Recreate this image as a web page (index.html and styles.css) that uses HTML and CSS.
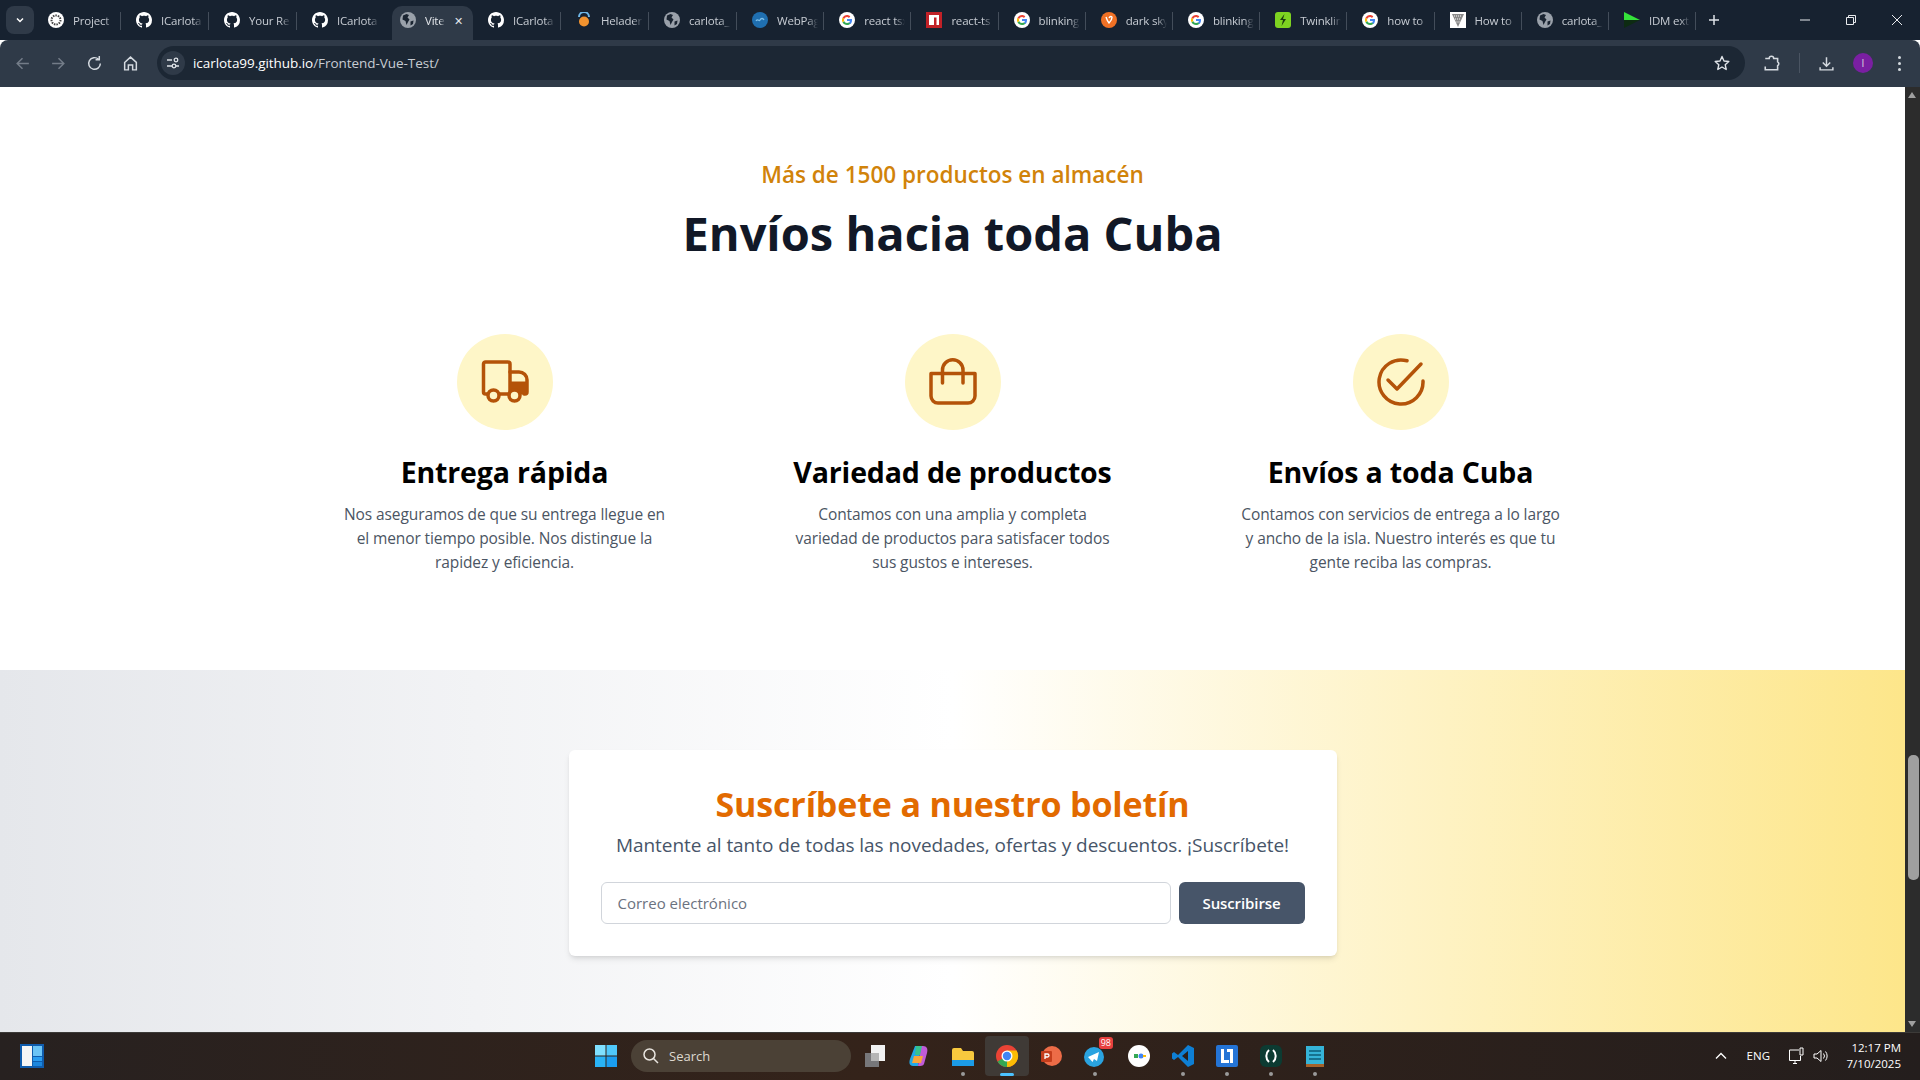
FILE: index.html
```html
<!DOCTYPE html>
<html lang="es">
<head>
  <meta charset="UTF-8">
  <title>Frontend Vue Test</title>
  <link rel="stylesheet" href="styles.css">
</head>
<body>

  <svg class="defs" width="0" height="0">
    <symbol id="gh" viewBox="0 0 16 16"><path fill="#fff" d="M8 0C3.58 0 0 3.58 0 8c0 3.54 2.29 6.53 5.47 7.59.4.07.55-.17.55-.38 0-.19-.01-.82-.01-1.49-2.01.37-2.53-.49-2.69-.94-.09-.23-.48-.94-.82-1.13-.28-.15-.68-.52-.01-.53.63-.01 1.08.58 1.23.82.72 1.21 1.87.87 2.33.66.07-.52.28-.87.51-1.07-1.78-.2-3.64-.89-3.64-3.95 0-.87.31-1.59.82-2.15-.08-.2-.36-1.02.08-2.12 0 0 .67-.21 2.2.82.64-.18 1.32-.27 2-.27s1.36.09 2 .27c1.53-1.04 2.2-.82 2.2-.82.44 1.1.16 1.92.08 2.12.51.56.82 1.27.82 2.15 0 3.07-1.87 3.75-3.65 3.95.29.25.54.73.54 1.48 0 1.07-.01 1.93-.01 2.2 0 .21.15.46.55.38A8 8 0 0 0 16 8c0-4.42-3.58-8-8-8z"/></symbol>
    <symbol id="globe" viewBox="0 0 16 16"><circle cx="8" cy="8" r="8" fill="#9aa1aa"/><path fill="#1a2431" d="M3 3.5 6.5 2 9 3 7.5 5.5 9.5 7.5 8 10 6.5 13 5.5 9 2.5 7.5zM10.5 9.5 13.5 8.5 13 12 10.5 13.5z"/></symbol>
    <symbol id="goog" viewBox="0 0 16 16"><circle cx="8" cy="8" r="8" fill="#fff"/><path fill="#4285f4" d="M13 8.1c0-.4 0-.7-.1-1H8v2h2.9c-.1.7-.5 1.200-1 1.600l1.600 1.300c1-.9 1.500-2.200 1.500-3.900z"/><path fill="#34a853" d="M8 13c1.400 0 2.500-.5 3.500-1.300L9.900 10.400c-.4.300-1 .5-1.900.5-1.300 0-2.400-.9-2.800-2L3.500 10.200C4.400 11.900 6.100 13 8 13z"/><path fill="#fbbc05" d="M5.200 8.900c-.2-.6-.2-1.200 0-1.800L3.500 5.800c-.7 1.400-.7 3 0 4.400z"/><path fill="#ea4335" d="M8 5.100c.8 0 1.400.3 1.900.8l1.400-1.400C10.500 3.500 9.400 3 8 3 6.100 3 4.400 4.100 3.500 5.800l1.700 1.300c.4-1.200 1.500-2 2.800-2z"/></symbol>
  </svg>

  <div class="tabstrip">
    <div class="tab-menu"><svg width="12" height="12" viewBox="0 0 12 12"><path d="M3 4.500 6 7.500 9 4.500" fill="none" stroke="#fff" stroke-width="1.500"/></svg></div>
    <div class="tabs">
      <div class="tab"><svg class="fav" viewBox="0 0 16 16"><circle cx="8" cy="8" r="8" fill="#fff"/><circle cx="8" cy="8" r="4.500" fill="none" stroke="#444" stroke-width="2" stroke-dasharray="1.500 1"/></svg><span>Project</span></div>
      <div class="tab"><svg class="fav"><use href="#gh"/></svg><span>ICarlota</span></div>
      <div class="tab"><svg class="fav"><use href="#gh"/></svg><span>Your Re</span></div>
      <div class="tab no-sep"><svg class="fav"><use href="#gh"/></svg><span>ICarlota</span></div>
      <div class="tab active"><svg class="fav"><use href="#globe"/></svg><span>Vite</span><b class="tab-x">✕</b></div>
      <div class="tab"><svg class="fav"><use href="#gh"/></svg><span>ICarlota</span></div>
      <div class="tab"><svg class="fav" viewBox="0 0 16 16"><path d="M3 5a5 5 0 0 1 10 0" fill="none" stroke="#6fb7e8" stroke-width="2"/><circle cx="8" cy="9.500" r="5" fill="#f2932f"/></svg><span>Heladería</span></div>
      <div class="tab"><svg class="fav"><use href="#globe"/></svg><span>carlota_</span></div>
      <div class="tab"><svg class="fav" viewBox="0 0 16 16"><circle cx="8" cy="8" r="8" fill="#1f6fb0"/><path d="M4 9c2-3 3 1 4-1s3-2 4 0" fill="none" stroke="#7fc0ea" stroke-width="1.300"/></svg><span>WebPage</span></div>
      <div class="tab"><svg class="fav"><use href="#goog"/></svg><span>react tsx</span></div>
      <div class="tab"><svg class="fav" viewBox="0 0 16 16"><rect width="16" height="16" fill="#c12127"/><path d="M3 3h10v10h-2.500V5.500H8V13H3z" fill="#fff"/></svg><span>react-ts</span></div>
      <div class="tab"><svg class="fav"><use href="#goog"/></svg><span>blinking</span></div>
      <div class="tab"><svg class="fav" viewBox="0 0 16 16"><circle cx="8" cy="8" r="8" fill="#f07125"/><path d="M5 5c1 3 2 5 3 6 2-2 3-4 3-5.500C11 4 9 4 8 6" fill="none" stroke="#fff" stroke-width="1.400"/></svg><span>dark sky</span></div>
      <div class="tab"><svg class="fav"><use href="#goog"/></svg><span>blinking</span></div>
      <div class="tab"><svg class="fav" viewBox="0 0 16 16"><rect width="16" height="16" rx="3" fill="#7ed321"/><path d="M9.500 2 5 8h3l-1.500 6L11 7H8z" fill="#1d3b10"/></svg><span>Twinkling</span></div>
      <div class="tab"><svg class="fav"><use href="#goog"/></svg><span>how to</span></div>
      <div class="tab"><svg class="fav" viewBox="0 0 16 16"><rect width="16" height="16" fill="#fff"/><path d="M2 2h12L8 15z" fill="#8a8a8a"/><path d="M4 4h8M5 7h6M6.500 10h3" stroke="#fff" stroke-dasharray="1 1"/></svg><span>How to</span></div>
      <div class="tab"><svg class="fav"><use href="#globe"/></svg><span>carlota_</span></div>
      <div class="tab"><svg class="fav" viewBox="0 0 16 16"><path d="M0 0 16 8 0 8z" fill="#35e33a"/><path d="M0 8H16L0 16z" fill="#0d2b12"/></svg><span>IDM extension</span></div>
    </div>
    <div class="new-tab"><svg width="12" height="12" viewBox="0 0 12 12"><path d="M6 1v10M1 6h10" stroke="#dfe3e8" stroke-width="1.500"/></svg></div>
    <div class="win-btns">
      <svg width="12" height="12" viewBox="0 0 12 12"><path d="M1 6h10" stroke="#e8eaed"/></svg>
      <svg width="12" height="12" viewBox="0 0 12 12"><path d="M1.500 3.500h7v7h-7zM3.500 3.500v-2h7v7h-2" fill="none" stroke="#e8eaed"/></svg>
      <svg width="12" height="12" viewBox="0 0 12 12"><path d="M1 1l10 10M11 1 1 11" stroke="#e8eaed"/></svg>
    </div>
  </div>

  <div class="toolbar">
    <svg class="tool dim" viewBox="0 0 16 16"><path d="M14 8H3M8 3 3 8l5 5" fill="none"/></svg>
    <svg class="tool dim" viewBox="0 0 16 16"><path d="M2 8h11M8 3l5 5-5 5" fill="none"/></svg>
    <svg class="tool" viewBox="0 0 16 16"><path d="M13.500 8A5.500 5.500 0 1 1 11.800 4M12.500 1v3.500H9" fill="none"/></svg>
    <svg class="tool" viewBox="0 0 16 16"><path d="M2.500 7 8 2l5.500 5v7H10V9.500H6V14H2.500z" fill="none"/></svg>
    <div class="address">
      <div class="site-info"><svg width="14" height="14" viewBox="0 0 14 14"><path d="M1 4h5M10 10h3M1 10h5" stroke="#dfe3e8" stroke-width="1.300"/><circle cx="10" cy="4" r="1.800" fill="none" stroke="#dfe3e8" stroke-width="1.300"/><circle cx="8" cy="10" r="1.800" fill="none" stroke="#dfe3e8" stroke-width="1.300"/></svg></div>
      <span class="url">icarlota99.github.io<span class="url-path">/Frontend-Vue-Test/</span></span>
      <svg class="star" viewBox="0 0 16 16"><path d="M8 1.500 10 6l4.800.5-3.600 3.200 1 4.800L8 12l-4.200 2.500 1-4.800L1.200 6.500 6 6z" fill="none" stroke="#dfe3e8" stroke-width="1.400" stroke-linejoin="round"/></svg>
    </div>
    <svg class="tool ext" viewBox="0 0 16 16"><path d="M2 4h3.500a2 2 0 0 1 4 0H13v3a2 2 0 0 1 0 3.500V14H2v-3" fill="none"/></svg>
    <i class="tool-sep"></i>
    <svg class="tool" viewBox="0 0 16 16"><path d="M8 2v8.500M4.500 7 8 10.500 11.500 7M2 11.500V14h12v-2.500" fill="none"/></svg>
    <div class="avatar">I</div>
    <div class="kebab"><i></i><i></i><i></i></div>
  </div>

  <div class="viewport">
    <main class="page">
      <section class="envios">
        <p class="kicker">Más de 1500 productos en almacén</p>
        <h1 class="envios-title">Envíos hacia toda Cuba</h1>
        <div class="features">
          <article class="feature">
            <div class="feature-icon">
              <svg viewBox="0 0 48 48" fill="none" stroke="#b45309" stroke-width="3.500" stroke-linecap="round" stroke-linejoin="round">
                <path d="M7 36H4.500a2 2 0 0 1-2-2V6a2 2 0 0 1 2-2H27a2 2 0 0 1 2 2v30H18"/>
                <path d="M29 14h9a8 8 0 0 1 8 8v12a2 2 0 0 1-2 2h-1"/>
                <path d="M29 24h17v12H38l-9 0z" fill="#b45309" stroke-width="1"/>
                <circle cx="12.500" cy="37.500" r="5.500" fill="#fef6c8"/>
                <circle cx="33.500" cy="37.500" r="5.500" fill="#fef6c8"/>
              </svg>
            </div>
            <h3>Entrega rápida</h3>
            <p>Nos aseguramos de que su entrega llegue en el menor tiempo posible. Nos distingue la rapidez y eficiencia.</p>
          </article>
          <article class="feature">
            <div class="feature-icon">
              <svg viewBox="0 0 48 48" fill="none" stroke="#b45309" stroke-width="3.500" stroke-linecap="round" stroke-linejoin="round">
                <path d="M2 15.500h44V38a7 7 0 0 1-7 7H9a7 7 0 0 1-7-7z"/>
                <path d="M13.500 25V12a10.250 10.250 0 0 1 20.500 0v13"/>
              </svg>
            </div>
            <h3>Variedad de productos</h3>
            <p>Contamos con una amplia y completa variedad de productos para satisfacer todos sus gustos e intereses.</p>
          </article>
          <article class="feature">
            <div class="feature-icon">
              <svg viewBox="0 0 48 48" fill="none" stroke="#b45309" stroke-width="3.500" stroke-linecap="round" stroke-linejoin="round">
                <path d="M30 2.800A22 22 0 1 0 46 23"/>
                <path d="M11 22l9 9L44 6"/>
              </svg>
            </div>
            <h3>Envíos a toda Cuba</h3>
            <p>Contamos con servicios de entrega a lo largo y ancho de la isla. Nuestro interés es que tu gente reciba las compras.</p>
          </article>
        </div>
      </section>

      <section class="boletin">
        <div class="boletin-card">
          <h2>Suscríbete a nuestro boletín</h2>
          <p>Mantente al tanto de todas las novedades, ofertas y descuentos. ¡Suscríbete!</p>
          <form class="boletin-form">
            <input type="email" placeholder="Correo electrónico">
            <button type="button">Suscribirse</button>
          </form>
        </div>
      </section>
    </main>
    <div class="scrollbar">
      <i class="arrow-up"></i>
      <i class="thumb"></i>
      <i class="arrow-down"></i>
    </div>
  </div>

  <footer class="taskbar">
    <div class="tb-left">
      <svg class="tb-icon" viewBox="0 0 24 24"><rect x="2" y="1" width="24" height="24" fill="#0f5cad" transform="translate(-2 -1)"/><rect x="2" y="2" width="10" height="20" fill="#f5f5f5"/><rect x="13" y="2" width="9" height="10" fill="#6cc4f5"/><rect x="13" y="13" width="9" height="4" fill="#2a9df0"/><rect x="13" y="18" width="9" height="4" fill="#1b86dd"/></svg>
    </div>
    <div class="tb-center">
      <svg class="tb-icon" viewBox="0 0 24 24"><rect x="1" y="1" width="10.500" height="10.500" fill="#7fe0ff"/><rect x="12.500" y="1" width="10.500" height="10.500" fill="#4fc8fb"/><rect x="1" y="12.500" width="10.500" height="10.500" fill="#29b3f6"/><rect x="12.500" y="12.500" width="10.500" height="10.500" fill="#1a9df0"/></svg>
      <div class="tb-search"><svg width="18" height="18" viewBox="0 0 18 18"><circle cx="7.500" cy="7.500" r="5.500" fill="none" stroke="#e8e4de" stroke-width="1.500"/><path d="M11.500 11.500 16 16" stroke="#e8e4de" stroke-width="1.500"/></svg><span>Search</span></div>
      <div class="tb-item"><svg class="tb-icon" viewBox="0 0 24 24"><rect x="2" y="9" width="14" height="14" fill="#77777a"/><rect x="8" y="1" width="14" height="16" fill="#f2f2f2"/><rect x="8" y="9" width="8" height="8" fill="#b5b5b5"/></svg></div>
      <div class="tb-item"><svg class="tb-icon" viewBox="0 0 24 24"><path d="M8 2h6l-3 20H6C2 22 2 18 3 15z" fill="#1fa8e8"/><path d="M16 2c4 0 5 3 4 7l-3 11c-1 2-3 2-6 2l3-20z" fill="#c05bd8"/><path d="M7 12h9l-2 7H5z" fill="#f6a63a"/><path d="M9 2h6l-2 9H8z" fill="#36c28e"/></svg></div>
      <div class="tb-item tb-open"><svg class="tb-icon" viewBox="0 0 24 24"><path d="M1 6a2 2 0 0 1 2-2h7l2 3h9a2 2 0 0 1 2 2v11a2 2 0 0 1-2 2H3a2 2 0 0 1-2-2z" fill="#f8c93e"/><rect x="1" y="16" width="22" height="6" fill="#1c9be6"/></svg></div>
      <div class="tb-item tb-active"><svg class="tb-icon" viewBox="0 0 24 24"><circle cx="12" cy="12" r="11" fill="#ea4335"/><path d="M12 12 2.500 17.500A11 11 0 0 0 12 23c1 0 3-.5 3-.5z" fill="#34a853"/><path d="M12 6.500h9.600A11 11 0 0 1 12 23z" fill="#fbbc05"/><circle cx="12" cy="12" r="5.500" fill="#fff"/><circle cx="12" cy="12" r="4.200" fill="#4285f4"/></svg></div>
      <div class="tb-item"><svg class="tb-icon" viewBox="0 0 24 24"><circle cx="13" cy="12" r="10" fill="#ed6c47"/><rect x="2" y="7" width="11" height="11" rx="1" fill="#c43e1c"/><path d="M6 15V10h2.500a1.500 1.500 0 0 1 0 3H6" fill="none" stroke="#fff" stroke-width="1.300"/></svg></div>
      <div class="tb-item tb-open"><svg class="tb-icon" viewBox="0 0 24 24"><circle cx="11" cy="13" r="10" fill="#2aa3e0"/><path d="M5 13 16 8l-2 9-3-2-1.500 3z" fill="#fff"/></svg><span class="tb-badge">98</span></div>
      <div class="tb-item"><svg class="tb-icon" viewBox="0 0 24 24"><circle cx="12" cy="12" r="11" fill="#fff"/><rect x="7" y="10" width="4" height="4" fill="#34a853"/><circle cx="14" cy="12" r="2.500" fill="#4285f4"/><rect x="16" y="11" width="3" height="2" fill="#fbbc05"/></svg></div>
      <div class="tb-item tb-open"><svg class="tb-icon" viewBox="0 0 24 24"><path d="M17 1 7 11 3 8 1 9.500v5L3 16l4-3 10 10 6-3V4z" fill="#0e7fd4"/><path d="M17 7v10l-6-5z" fill="#2a1f1a"/></svg></div>
      <div class="tb-item tb-open"><svg class="tb-icon" viewBox="0 0 24 24"><rect x="1" y="1" width="22" height="22" rx="2" fill="#2474d6"/><path d="M6 5h3v11h5v3H6zM12 5h6v14h-3V8h-3z" fill="#fff"/></svg></div>
      <div class="tb-item tb-open"><svg class="tb-icon" viewBox="0 0 24 24"><rect x="1" y="1" width="22" height="22" rx="6" fill="#0c3b32"/><path d="M10 6a8 8 0 0 0 0 12M14 6a8 8 0 0 1 0 12" fill="none" stroke="#fff" stroke-width="2"/></svg></div>
      <div class="tb-item tb-open"><svg class="tb-icon" viewBox="0 0 24 24"><rect x="3" y="2" width="18" height="20" fill="#35b4d8"/><rect x="3" y="20" width="18" height="3" fill="#a5632b"/><path d="M6 7h12M6 11h12M6 15h12" stroke="#0d5e78" stroke-width="1.500"/></svg></div>
    </div>
    <div class="tb-tray">
      <svg width="14" height="14" viewBox="0 0 14 14"><path d="M2 9.500 7 4.500l5 5" fill="none" stroke="#fff" stroke-width="1.300"/></svg>
      <span class="tray-lang">ENG</span>
      <svg width="18" height="18" viewBox="0 0 18 18"><path d="M11 3H1.500v10.500h11V9M5 16.500h4M7 13.500v3M12 1h3v7h-3z" fill="none" stroke="#fff"/></svg>
      <svg width="18" height="18" viewBox="0 0 18 18"><path d="M2 7h3l4-3.500v11L5 11H2zM11.500 6.500a4 4 0 0 1 0 5M13.500 4.500a7 7 0 0 1 0 9" fill="none" stroke="#fff"/></svg>
      <div class="tray-clock"><span>12:17 PM</span><span>7/10/2025</span></div>
    </div>
  </footer>

</body>
</html>
```

FILE: styles.css
```css
* {
  box-sizing: border-box;
}
html, body {
  height: 100%;
}
body {
  margin: 0;
  display: flex;
  flex-direction: column;
  overflow: hidden;
  font-family: "Open Sans", "Noto Sans", sans-serif;
  background: #fff;
}
.defs {
  position: absolute;
}

/* browser chrome */
.tabstrip {
  height: 40px;
  flex: none;
  display: flex;
  align-items: center;
  background: #172230;
  color: #c7ccd3;
  font-size: 11.5px;
  letter-spacing: -0.2px;
}
.tab-menu {
  width: 28px;
  height: 28px;
  margin: 0 6px;
  flex: none;
  display: flex;
  align-items: center;
  justify-content: center;
  border-radius: 8px;
  background: #2f3a48;
}
.tabs {
  display: flex;
  height: 100%;
  align-items: flex-end;
  margin-left: -7px;
}
.tab {
  width: 87.2px;
  height: 34px;
  flex: none;
  padding: 0 6px 6px 15px;
  display: flex;
  align-items: center;
  gap: 9px;
  position: relative;
}
.tab:nth-child(-n+8) {
  width: 88px;
}
.tab::after {
  content: "";
  position: absolute;
  right: 0;
  top: 6px;
  height: 18px;
  width: 1px;
  background: #434d5a;
}
.tab.no-sep::after, .tab.active::after {
  display: none;
}
.tab span {
  white-space: nowrap;
  overflow: hidden;
  flex: 1;
  -webkit-mask-image: linear-gradient(to right, #000 75%, transparent);
  mask-image: linear-gradient(to right, #000 75%, transparent);
}
.fav {
  width: 16px;
  height: 16px;
  flex: none;
}
.tab.active {
  width: 81px;
  margin-left: 7px;
  padding-left: 8px;
  padding-right: 10px;
  background: #2f3a48;
  border-radius: 10px 10px 0 0;
  color: #e3e6ea;
}
.tab-x {
  font-size: 11px;
  font-weight: 400;
  flex: none;
}
.new-tab {
  margin-left: 3px;
  width: 30px;
  display: flex;
  justify-content: center;
}
.win-btns {
  margin-left: auto;
  width: 138px;
  padding: 0 17px;
  display: flex;
  justify-content: space-between;
}
.toolbar {
  height: 47px;
  flex: none;
  display: flex;
  align-items: center;
  padding: 0 12px 1px 14px;
  background: #2f3a48;
  border-radius: 8px 8px 0 0;
}
.tool {
  width: 17px;
  height: 17px;
  flex: none;
  margin-right: 19px;
  stroke: #d5dae0;
  stroke-width: 1.4;
}
.tool.dim {
  stroke: #737c88;
}
.address {
  width: 1588px;
  height: 34px;
  margin-left: -1px;
  flex: none;
  display: flex;
  align-items: center;
  padding: 0 15px 0 4px;
  border-radius: 17px;
  background: #1c2734;
  color: #fff;
  font-size: 13.5px;
  letter-spacing: -0.05px;
}
.site-info {
  width: 24px;
  height: 24px;
  display: flex;
  align-items: center;
  justify-content: center;
  border-radius: 50%;
  background: #2f3a48;
  margin-right: 8px;
}
.url-path {
  color: #c7ccd3;
}
.star {
  width: 16px;
  height: 16px;
  margin-left: auto;
}
.ext {
  width: 18px;
  height: 18px;
  margin: 0 0 0 18px;
}
.tool-sep {
  width: 1px;
  height: 20px;
  margin: 0 18px;
  background: #4a5462;
}
.avatar {
  width: 20px;
  height: 20px;
  margin-left: -1px;
  flex: none;
  display: flex;
  align-items: center;
  justify-content: center;
  border-radius: 50%;
  background: #7a1fa2;
  color: #ddd;
  font-size: 10px;
}
.kebab {
  margin-left: 25px;
  display: flex;
  flex-direction: column;
  gap: 3px;
}
.kebab i {
  width: 3px;
  height: 3px;
  border-radius: 50%;
  background: #d5dae0;
}

/* page */
.viewport {
  flex: 1;
  min-height: 0;
  display: flex;
}
.page {
  flex: 1;
  min-width: 0;
  display: flex;
  flex-direction: column;
}
.envios {
  height: 583px;
  padding-top: 72px;
  text-align: center;
}
.kicker {
  margin: 0;
  font-size: 22.5px;
  line-height: 32px;
  font-weight: 600;
  color: #d1830a;
}
.envios-title {
  margin: 18px 0 0;
  font-size: 47px;
  line-height: 48px;
  font-weight: 700;
  color: #111827;
}
.features {
  width: 1344px;
  margin: 77px auto 0;
  display: grid;
  grid-template-columns: repeat(3, 1fr);
}
.feature {
  display: flex;
  flex-direction: column;
  align-items: center;
}
.feature-icon {
  width: 96px;
  height: 96px;
  display: flex;
  align-items: center;
  justify-content: center;
  border-radius: 50%;
  background: #fef6c8;
}
.feature-icon svg {
  width: 48px;
  height: 48px;
}
.feature h3 {
  margin: 24px 0 0;
  font-size: 28.5px;
  line-height: 36px;
  font-weight: 700;
  letter-spacing: -0.15px;
  color: #000;
}
.feature p {
  width: 326px;
  margin: 12px 0 0;
  font-size: 15.5px;
  line-height: 24px;
  letter-spacing: -0.1px;
  text-align: center;
  color: #4b5563;
}
.boletin {
  flex: 1;
  padding-top: 80px;
  background: linear-gradient(to right, #e5e7eb, #fff 50%, #fde68a);
}
.boletin-card {
  width: 768px;
  margin: 0 auto;
  padding: 32px;
  border-radius: 6px;
  background: #fff;
  text-align: center;
  box-shadow: 0 4px 6px -1px rgba(0,0,0,.1), 0 2px 4px -2px rgba(0,0,0,.1);
}
.boletin-card h2 {
  margin: 0;
  font-size: 34px;
  line-height: 44px;
  font-weight: 700;
  letter-spacing: -0.15px;
  color: #e26a00;
}
.boletin-card p {
  margin: 5px 0 0;
  font-size: 19px;
  line-height: 28px;
  letter-spacing: -0.05px;
  white-space: nowrap;
  color: #475569;
}
.boletin-form {
  display: flex;
  gap: 8px;
  margin-top: 23px;
}
.boletin-form input {
  flex: 1;
  min-width: 0;
  height: 42px;
  padding: 0 16px;
  border: 1px solid #d1d5db;
  border-radius: 6px;
  font: inherit;
  font-size: 15px;
}
.boletin-form input::placeholder {
  color: #6b7280;
}
.boletin-form button {
  width: 126px;
  height: 42px;
  border: 0;
  border-radius: 6px;
  background: #475569;
  color: #fff;
  font: inherit;
  font-size: 15px;
  letter-spacing: -0.1px;
  font-weight: 600;
}
.scrollbar {
  width: 15px;
  flex: none;
  position: relative;
  background: #2c2c2c;
}
.arrow-up, .arrow-down {
  position: absolute;
  left: 3px;
  width: 0;
  height: 0;
  border-left: 4.5px solid transparent;
  border-right: 4.5px solid transparent;
}
.arrow-up {
  top: 5px;
  border-bottom: 6px solid #9f9f9f;
}
.arrow-down {
  bottom: 5px;
  border-top: 6px solid #9f9f9f;
}
.thumb {
  position: absolute;
  left: 3px;
  right: 1px;
  top: 668px;
  height: 125px;
  border-radius: 5px;
  background: #9f9f9f;
}

/* windows taskbar */
.taskbar {
  height: 48px;
  flex: none;
  display: flex;
  align-items: center;
  padding-bottom: 2px;
  border-top: 1px solid #3c3a38;
  background: linear-gradient(to right, #272120, #34231a 45%, #241e1d);
  color: #fff;
}
.tb-left {
  width: 594px;
  padding-left: 20px;
  flex: none;
  display: flex;
}
.tb-icon {
  width: 24px;
  height: 24px;
  display: block;
}
.tb-center {
  display: flex;
  align-items: center;
}
.tb-search {
  width: 220px;
  height: 32px;
  margin: 0 2px 0 13px;
  padding-left: 11px;
  flex: none;
  display: flex;
  align-items: center;
  gap: 9px;
  border-radius: 16px;
  background: #4b4136;
  color: #ded9d1;
  font-size: 13px;
}
.tb-item {
  width: 44px;
  height: 40px;
  flex: none;
  display: flex;
  align-items: center;
  justify-content: center;
  position: relative;
}
.tb-open::after, .tb-active::after {
  content: "";
  position: absolute;
  bottom: 0;
  left: 20px;
  width: 4px;
  height: 4px;
  border-radius: 50%;
  background: #9a9a9a;
}
.tb-active {
  border-radius: 4px;
  background: #3f3a36;
}
.tb-active::after {
  left: 15px;
  width: 14px;
  height: 3px;
  border-radius: 2px;
  background: #4cc2ff;
}
.tb-badge {
  position: absolute;
  top: 1px;
  right: 4px;
  padding: 0 2px;
  border-radius: 3px;
  background: #e8403f;
  color: #fff;
  font-size: 9px;
  line-height: 12px;
}
.tb-tray {
  margin-left: auto;
  padding-right: 19px;
  display: flex;
  align-items: center;
  font-size: 12px;
}
.tray-lang {
  margin: 0 18px 0 19px;
  font-size: 11.5px;
}
.tb-tray svg + svg {
  margin-left: 6px;
}
.tray-clock {
  width: 60px;
  margin-left: 11px;
  display: flex;
  flex-direction: column;
  align-items: flex-end;
  gap: 1px;
  line-height: 15px;
  font-size: 11.5px;
}
```
